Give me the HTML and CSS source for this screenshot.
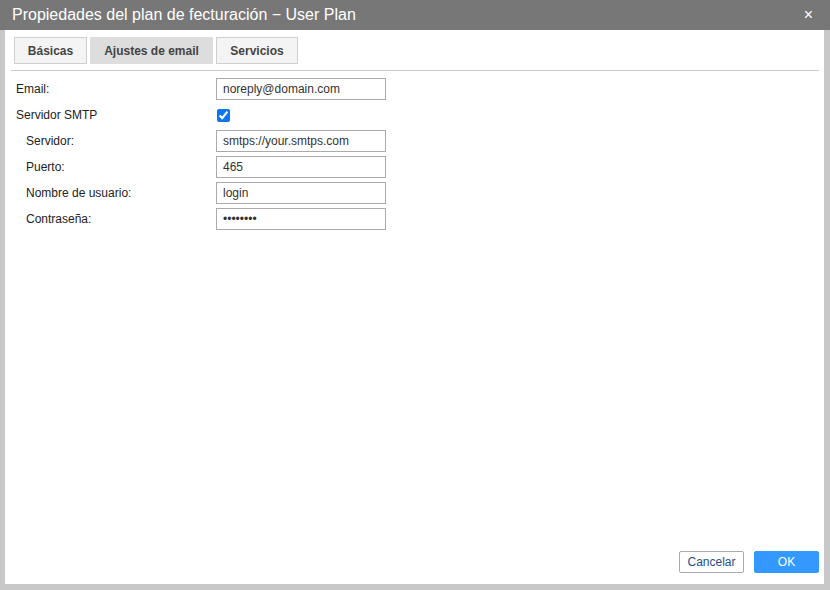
FILE: index.html
```html
<!DOCTYPE html>
<html lang="es">
<head>
<meta charset="utf-8">
<title>Propiedades del plan</title>
<link rel="stylesheet" href="styles.css">
</head>
<body>
<div class="dialog">
  <div class="header">
    <span class="title">Propiedades del plan de fecturación − User Plan</span>
    <span class="close">×</span>
  </div>
  <div class="panel">
    <div class="tabs">
      <div class="tab tab-basic">Básicas</div>
      <div class="tab tab-email active">Ajustes de email</div>
      <div class="tab tab-serv">Servicios</div>
    </div>
    <div class="form">
      <label class="lbl">Email:</label>
      <input class="field" type="text" value="noreply@domain.com">
      <label class="lbl">Servidor SMTP</label>
      <div class="chk-cell"><input class="chk" type="checkbox" checked></div>
      <label class="lbl sub">Servidor:</label>
      <input class="field" type="text" value="smtps://your.smtps.com">
      <label class="lbl sub">Puerto:</label>
      <input class="field" type="text" value="465">
      <label class="lbl sub">Nombre de usuario:</label>
      <input class="field" type="text" value="login">
      <label class="lbl sub">Contraseña:</label>
      <input class="field" type="password" value="12345678">
    </div>
    <div class="footer">
      <button class="btn cancel">Cancelar</button>
      <button class="btn ok">OK</button>
    </div>
  </div>
</div>
</body>
</html>
```
FILE: styles.css
```css
* { box-sizing: border-box; }
html, body { margin: 0; padding: 0; }
body {
  width: 830px;
  height: 590px;
  background: #c8c8c8;
  font-family: "Liberation Sans", Arial, sans-serif;
  font-size: 12px;
  color: #222;
  overflow: hidden;
}
.dialog {
  display: flex;
  flex-direction: column;
  height: 590px;
}
.header {
  height: 30px;
  flex: none;
  background: #777777;
  color: #fff;
  display: flex;
  align-items: center;
  justify-content: space-between;
  padding: 0 17px 0 12px;
}
.title { font-size: 16px; }
.close { font-size: 16px; line-height: 1; }
.panel {
  flex: 1;
  background: #fff;
  margin: 0 6px 6px 5px;
  display: flex;
  flex-direction: column;
}
.tabs {
  display: flex;
  gap: 3px;
  margin: 7px 5px 0 6px;
  padding: 0 0 6px 3px;
  border-bottom: 1px solid #cccccc;
}
.tab {
  height: 27px;
  display: flex;
  align-items: center;
  justify-content: center;
  background: #f4f4f4;
  border: 1px solid #cfcfcf;
  font-weight: bold;
  color: #444;
  font-size: 12px;
}
.tab-basic { width: 73px; }
.tab-email { width: 123px; }
.tab-serv { width: 82px; }
.tab.active {
  background: #dddddd;
  border-color: #dddddd;
}
.form {
  display: grid;
  grid-template-columns: 200px 170px;
  grid-auto-rows: 22px;
  row-gap: 4px;
  margin: 7px 0 0 11px;
  align-items: center;
}
.lbl { color: #222; }
.lbl.sub { padding-left: 10px; }
.field {
  height: 22px;
  width: 170px;
  border: 1px solid #aaaaaa;
  padding: 0 6px;
  font-family: "Liberation Sans", Arial, sans-serif;
  font-size: 12px;
  color: #333;
  background: #fff;
  margin: 0;
  border-radius: 0;
  outline: none;
}
.chk-cell { display: flex; align-items: center; }
.chk {
  width: 13px;
  height: 13px;
  margin: 0 0 0 1px;
  accent-color: #0b75f5;
}
.footer {
  margin-top: auto;
  display: flex;
  justify-content: flex-end;
  gap: 10px;
  padding: 0 5px 11px 0;
}
.btn {
  width: 65px;
  height: 22px;
  font-family: "Liberation Sans", Arial, sans-serif;
  font-size: 12px;
  border-radius: 2px;
  padding: 0;
  margin: 0;
}
.btn.cancel {
  background: #fff;
  border: 1px solid #aaaaaa;
  color: #1f4f7f;
}
.btn.ok {
  background: #3399ff;
  border: 1px solid #3399ff;
  color: #fff;
}
```
